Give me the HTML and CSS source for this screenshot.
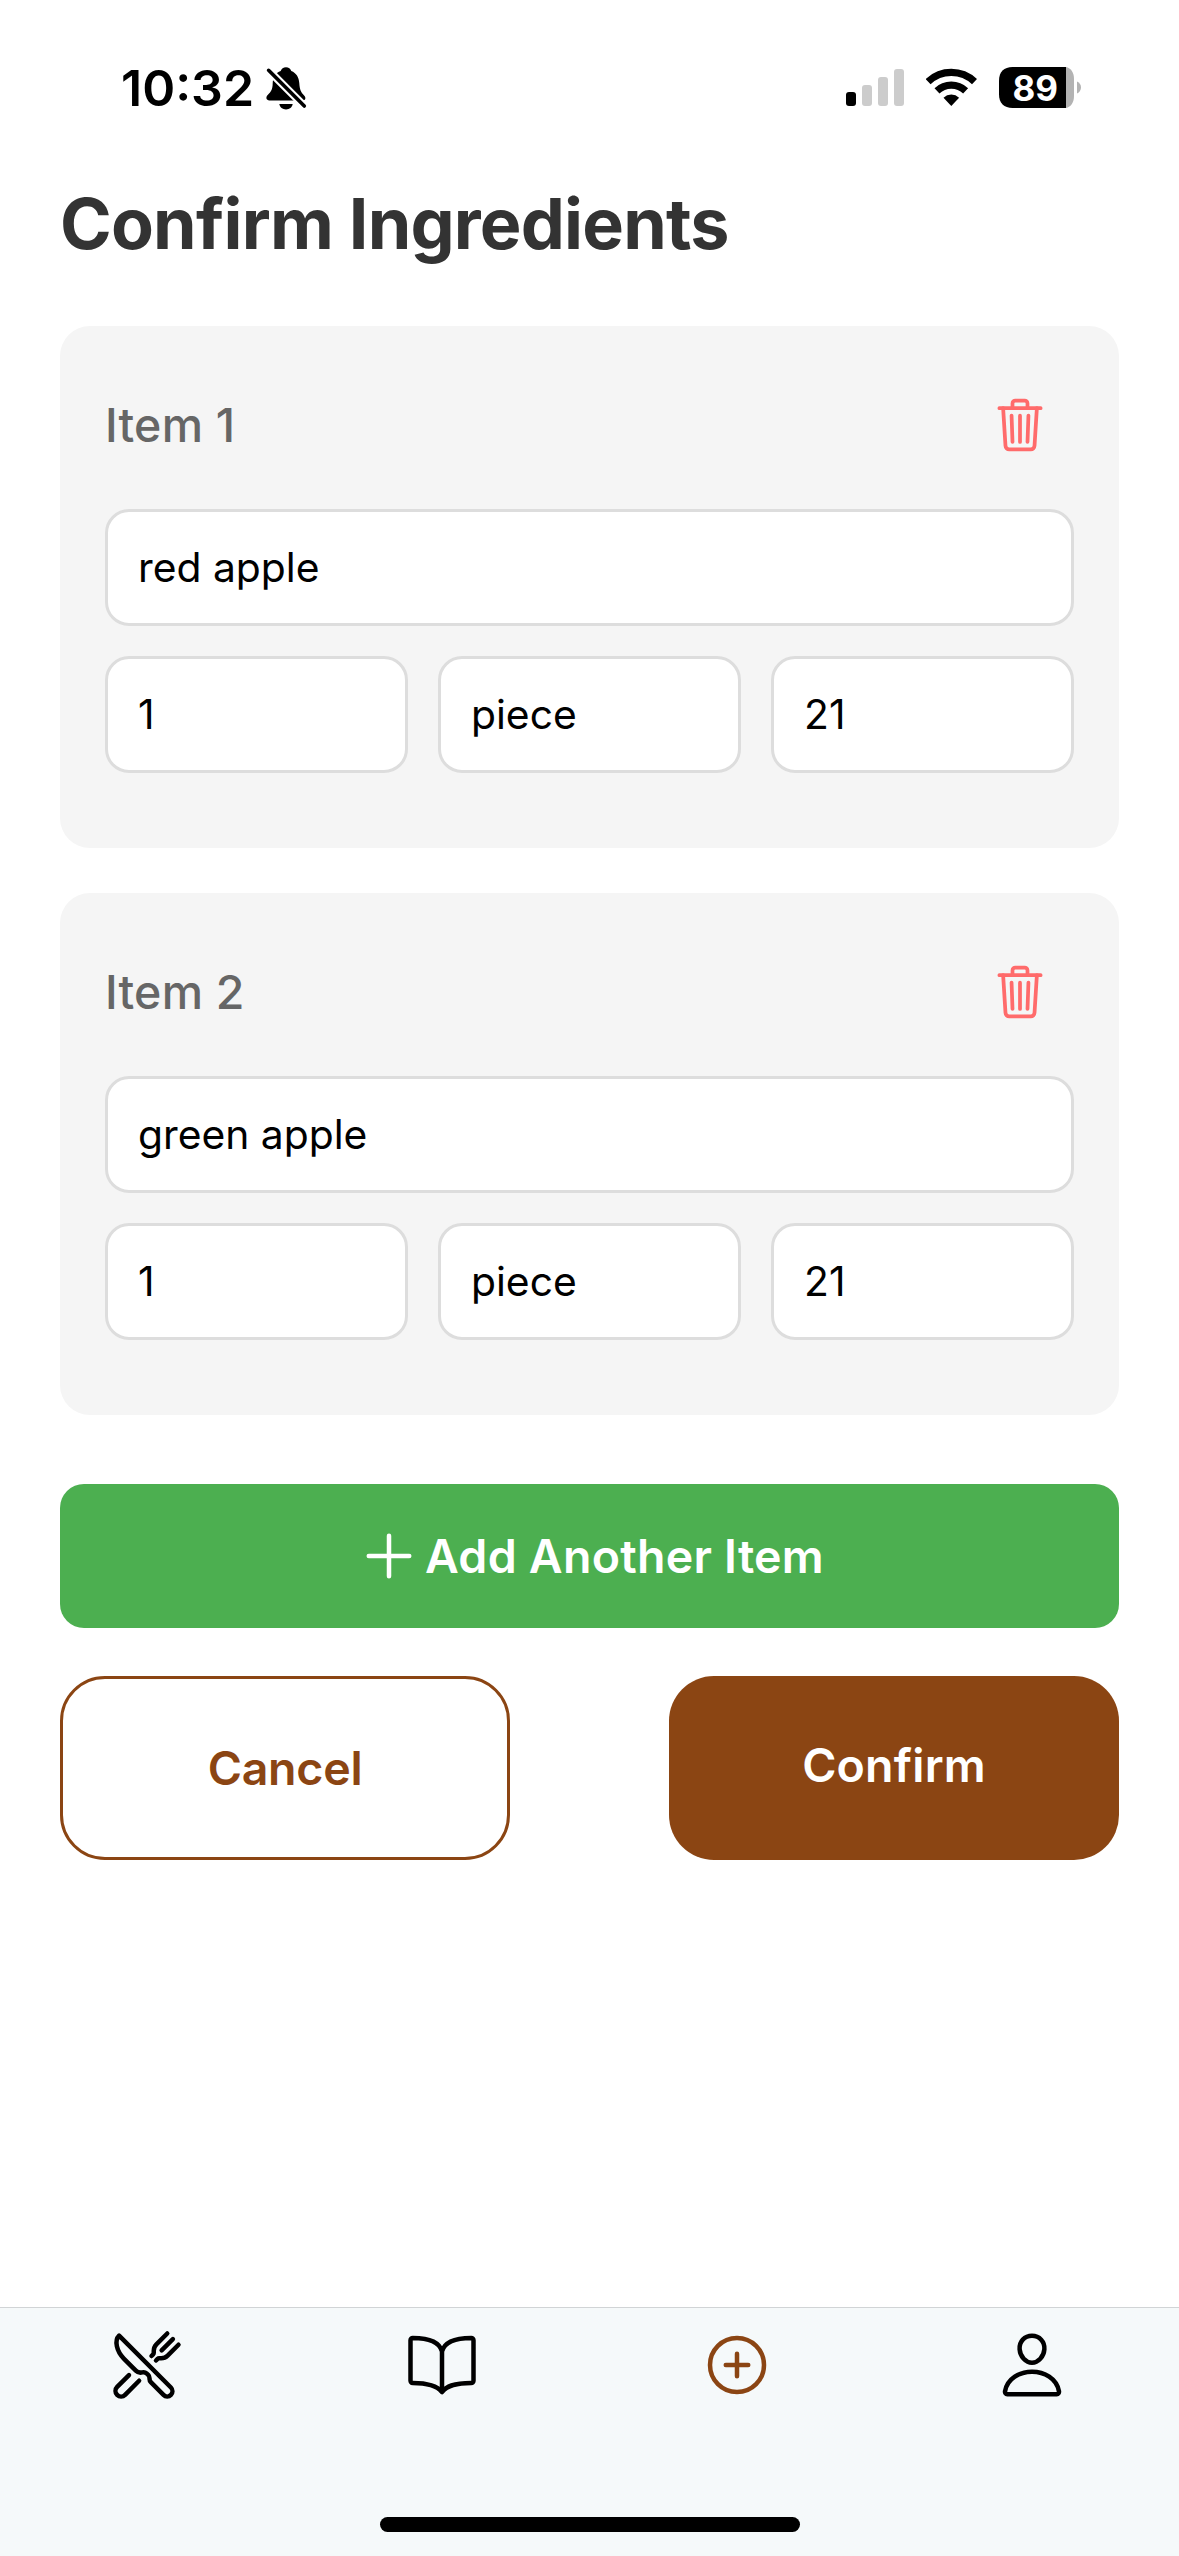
FILE: index.html
```html
<!DOCTYPE html>
<html lang="en">
<head>
  <meta charset="utf-8">
  <title>Confirm Ingredients</title>
  <link rel="stylesheet" href="styles.css">
</head>
<body>
  <svg class="sprite" aria-hidden="true">
    <symbol id="trash" viewBox="0 0 512 512">
      <path d="M112 112l20 320c.95 18.49 14.4 32 32 32h184c17.67 0 30.87-13.51 32-32l20-320" stroke-linejoin="round"/>
      <path d="M80 112h352M192 112V72a23.93 23.93 0 0124-24h80a23.93 23.93 0 0124 24v40M256 176v224M184 176l8 224M328 176l-8 224"/>
    </symbol>
  </svg>

  <header class="status-bar">
    <div class="status-group status-left">
      <span class="time">10:32</span>
      <svg width="44" height="44" viewBox="0 0 44 44">
        <path d="M22 1.3c2.6 0 4.600 1.500 5.300 3.700 5 2 7.600 6.200 8 12.300.4 6.500 1.800 9.200 4.800 12.200 2.200 2.200 1.500 4.900-1.400 4.900H5.400c-3.300 0-3.900-3.100-1.700-5.300 3.300-3.300 4.900-5.400 5-11.800.2-6.200 3-10.400 8-12.300C17.400 2.800 19.400 1.300 22 1.300z"/>
        <path d="M15.300 38h13.400c-.6 3.300-3.200 5.400-6.700 5.400s-6.100-2.100-6.700-5.400z"/>
        <path d="M2 1.700L43 42.700" stroke="#fff" stroke-width="7.800"/>
        <path d="M4.600 4.300L40.300 40" stroke="#000" stroke-width="3.600" stroke-linecap="round"/>
      </svg>
    </div>
    <div class="status-group status-right">
      <svg width="58" height="44" viewBox="0 0 58 44">
        <rect x="0" y="26" width="10" height="14" rx="3"/>
        <g fill="#ccc">
          <rect x="16" y="19" width="10" height="21" rx="3"/>
          <rect x="32" y="11" width="10" height="29" rx="3"/>
          <rect x="48" y="3" width="10" height="37" rx="3"/>
        </g>
      </svg>
      <svg width="51" height="44" viewBox="0 0 51 44">
        <g fill="none" stroke="#000" stroke-width="7.200">
          <path d="M2.100 15.600a33.700 33.700 0 0146.400 0"/>
          <path d="M11 24.900a20.800 20.800 0 0128.600 0"/>
        </g>
        <path d="M25.300 40l-7.800-8.300a11.400 11.400 0 0115.600 0z"/>
      </svg>
      <svg width="82" height="44" viewBox="0 0 82 44">
        <path d="M67 1.100c5 1.200 8 5.500 8 12v17c0 6.500-3 10.800-8 12z" fill="#b3b3b3"/>
        <path d="M13.500 1H67v41H13.500C5 42 0 37 0 28.500v-14C0 6 5 1 13.500 1z"/>
        <path d="M78 15.600c2.600 1.100 4 3.300 4 5.900s-1.400 4.800-4 5.900z" fill="#b3b3b3"/>
        <text class="battery-level" x="13.600" y="34.500">89</text>
      </svg>
    </div>
  </header>

  <main class="content">
    <h1 class="title">Confirm Ingredients</h1>

    <section class="card">
      <div class="card-header">
        <h2 class="card-title">Item 1</h2>
        <button class="delete" aria-label="Delete item 1"><svg width="60" height="60"><use href="#trash"/></svg></button>
      </div>
      <input class="field" value="red apple" aria-label="Name">
      <div class="field-row">
        <input class="field" value="1" aria-label="Quantity">
        <input class="field" value="piece" aria-label="Unit">
        <input class="field" value="21" aria-label="Days">
      </div>
    </section>

    <section class="card">
      <div class="card-header">
        <h2 class="card-title">Item 2</h2>
        <button class="delete" aria-label="Delete item 2"><svg width="60" height="60"><use href="#trash"/></svg></button>
      </div>
      <input class="field" value="green apple" aria-label="Name">
      <div class="field-row">
        <input class="field" value="1" aria-label="Quantity">
        <input class="field" value="piece" aria-label="Unit">
        <input class="field" value="21" aria-label="Days">
      </div>
    </section>

    <button class="add">
      <svg class="icon" width="72" height="72" viewBox="0 0 512 512"><path d="M256 112v288M400 256H112"/></svg>
      <span>Add Another Item</span>
    </button>

    <div class="actions">
      <button class="action cancel">Cancel</button>
      <button class="action confirm">Confirm</button>
    </div>
  </main>

  <footer class="tab-bar">
    <nav class="tabs">
      <a class="tab"><svg class="icon" width="72" height="72" viewBox="0 0 512 512">
        <path d="M57.490 47.740l368.430 368.430a37.280 37.280 0 010 52.720 37.290 37.290 0 01-52.720 0l-90-91.550a32 32 0 01-9.200-22.430v-5.530a32 32 0 00-9.520-22.780l-11.620-10.730a32 32 0 00-29.800-7.440 48.530 48.530 0 01-46.560-12.630l-85.430-85.440C40.390 159.680 21.740 83.150 57.490 47.740z"/>
        <path d="M400 32l-77.250 77.250A64 64 0 00304 154.510v14.860a16 16 0 01-4.690 11.320L288 192M320 224l11.310-11.310a16 16 0 0111.320-4.690h14.860a64 64 0 0045.260-18.750L480 112M440 72l-80 80M200 368l-99.720 100.280a40 40 0 01-56.560 0 40 40 0 010-56.560L128 328"/>
      </svg></a>
      <a class="tab"><svg class="icon" width="72" height="72" viewBox="0 0 512 512">
        <path d="M256 160c16-63.160 76.430-95.410 208-96a15.940 15.940 0 0116 16v288a16 16 0 01-16 16c-128 0-177.450 25.810-208 64-30.370-38-80-64-208-64-9.880 0-16-8.050-16-17.930V80a15.940 15.940 0 0116-16c131.570.59 192 32.840 208 96zM256 160v288"/>
      </svg></a>
      <a class="tab active"><svg class="icon" width="72" height="72" viewBox="0 0 512 512">
        <circle cx="256" cy="256" r="192"/><path d="M256 176v160M336 256H176"/>
      </svg></a>
      <a class="tab"><svg class="icon" width="72" height="72" viewBox="0 0 512 512">
        <path d="M344 144c-3.920 52.870-44 96-88 96s-84.150-43.120-88-96c-4-55 35-96 88-96s92 42 88 96z"/>
        <path d="M256 304c-87 0-175.300 48-191.640 138.600C62.390 453.520 68.570 464 80 464h352c11.440 0 17.620-10.480 15.650-21.400C431.300 352 343 304 256 304z"/>
      </svg></a>
    </nav>
    <div class="home-indicator"></div>
  </footer>
</body>
</html>
```
FILE: styles.css
```css
* {
  box-sizing: border-box;
}

body {
  margin: 0;
  height: 2556px;
  display: flex;
  flex-direction: column;
  background: #fff;
  color: #000;
  font-family: Inter, "Liberation Sans", sans-serif;
}

svg {
  display: block;
  flex: none;
}

button,
input {
  margin: 0;
  font-family: inherit;
}

.sprite {
  position: absolute;
  width: 0;
  height: 0;
}

.icon,
.delete svg {
  fill: none;
  stroke: currentColor;
  stroke-width: 32px;
  stroke-linecap: round;
  stroke-linejoin: round;
}

/* Status bar */
.status-bar {
  height: 141px;
  padding: 35px 98px 0 121px;
  display: flex;
  align-items: center;
  justify-content: space-between;
}

.status-group {
  display: flex;
  align-items: center;
}

.status-left {
  gap: 10px;
}

.status-right {
  gap: 22px;
}

.time {
  font-size: 50px;
  font-weight: 600;
  line-height: 60px;
}

.battery-level {
  fill: #fff;
  font-size: 35px;
  font-weight: 700;
}

/* Content */
.content {
  flex: 1;
  padding: 40px 60px 0;
}

.title {
  margin: 0 0 60px;
  color: #333;
  font-size: 70px;
  font-weight: 700;
  line-height: 85px;
  letter-spacing: -0.8px;
}

.card {
  margin-bottom: 45px;
  padding: 45px;
  border-radius: 30px;
  background: #f5f5f5;
}

.card-header {
  margin-bottom: 30px;
  display: flex;
  align-items: center;
  justify-content: space-between;
}

.card-title {
  margin: 0;
  color: #666;
  font-size: 46.5px;
  font-weight: 500;
  letter-spacing: 0.2px;
}

.delete {
  padding: 24px;
  border: 0;
  background: none;
  color: #ff6b6b;
}

.field {
  display: block;
  width: 100%;
  min-width: 0;
  height: 117px;
  padding: 0 30px 2px;
  border: 3px solid #ddd;
  border-radius: 24px;
  background: #fff;
  color: #000;
  font-size: 40.8px;
}

.field-row {
  margin: 30px 0;
  display: grid;
  grid-template-columns: repeat(3, 1fr);
  gap: 30px;
}

.add {
  width: 100%;
  height: 144px;
  margin-top: 69px;
  padding: 0 2px 0 0;
  display: flex;
  align-items: center;
  justify-content: center;
  border: 0;
  border-radius: 24px;
  background: #4caf50;
  color: #fff;
  font-size: 46.5px;
  font-weight: 600;
  letter-spacing: 0.25px;
}

.actions {
  margin-top: 48px;
  display: flex;
  justify-content: space-between;
}

.action {
  width: 450px;
  height: 184px;
  padding: 0;
  border-radius: 45px;
  font-size: 46.5px;
  font-weight: 600;
}

.cancel {
  border: 3px solid #8b4513;
  background: #fff;
  color: #8b4513;
  letter-spacing: -0.25px;
}

.confirm {
  padding-bottom: 6px;
  border: 0;
  background: #8b4513;
  color: #fff;
  letter-spacing: 0.2px;
}

/* Tab bar */
.tab-bar {
  height: 249px;
  padding: 21px 0 24px;
  display: flex;
  flex-direction: column;
  align-items: center;
  justify-content: space-between;
  border-top: 1px solid #d1d4d6;
  background: #f5f9fa;
}

.tabs {
  width: 100%;
  display: grid;
  grid-template-columns: repeat(4, 1fr);
}

.tab {
  display: flex;
  justify-content: center;
}

.tab.active {
  color: #8b4513;
}

.home-indicator {
  width: 420px;
  height: 15px;
  border-radius: 8px;
  background: #000;
}
```
